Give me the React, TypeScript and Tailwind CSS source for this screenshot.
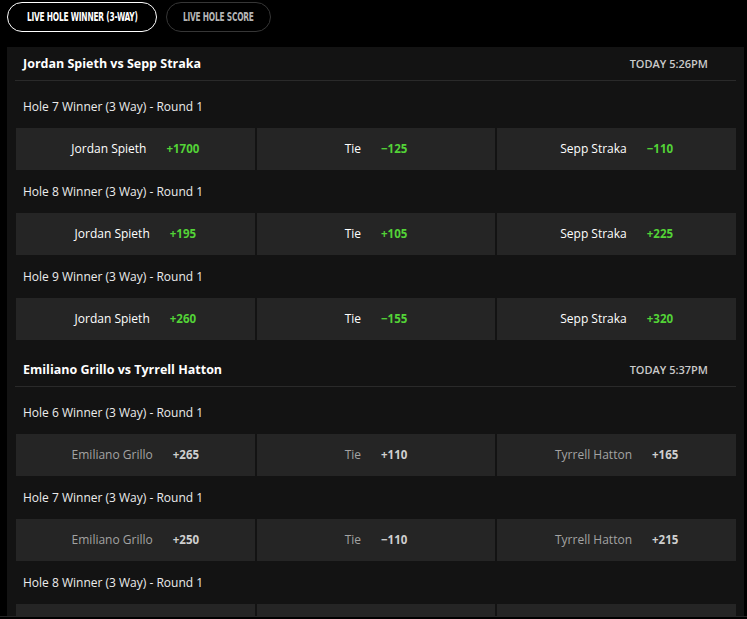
type Outcome = { name: string; odds: string };
type Market = { title: string; outcomes: Outcome[] };
type Match = { title: string; time: string; live: boolean; markets: Market[] };

const matches: Match[] = [
  {
    title: "Jordan Spieth vs Sepp Straka",
    time: "TODAY 5:26PM",
    live: true,
    markets: [
      {
        title: "Hole 7 Winner (3 Way) - Round 1",
        outcomes: [
          { name: "Jordan Spieth", odds: "+1700" },
          { name: "Tie", odds: "\u2212125" },
          { name: "Sepp Straka", odds: "\u2212110" },
        ],
      },
      {
        title: "Hole 8 Winner (3 Way) - Round 1",
        outcomes: [
          { name: "Jordan Spieth", odds: "+195" },
          { name: "Tie", odds: "+105" },
          { name: "Sepp Straka", odds: "+225" },
        ],
      },
      {
        title: "Hole 9 Winner (3 Way) - Round 1",
        outcomes: [
          { name: "Jordan Spieth", odds: "+260" },
          { name: "Tie", odds: "\u2212155" },
          { name: "Sepp Straka", odds: "+320" },
        ],
      },
    ],
  },
  {
    title: "Emiliano Grillo vs Tyrrell Hatton",
    time: "TODAY 5:37PM",
    live: false,
    markets: [
      {
        title: "Hole 6 Winner (3 Way) - Round 1",
        outcomes: [
          { name: "Emiliano Grillo", odds: "+265" },
          { name: "Tie", odds: "+110" },
          { name: "Tyrrell Hatton", odds: "+165" },
        ],
      },
      {
        title: "Hole 7 Winner (3 Way) - Round 1",
        outcomes: [
          { name: "Emiliano Grillo", odds: "+250" },
          { name: "Tie", odds: "\u2212110" },
          { name: "Tyrrell Hatton", odds: "+215" },
        ],
      },
      {
        // cells of this row are cut by the bottom edge, no text visible
        title: "Hole 8 Winner (3 Way) - Round 1",
        outcomes: [
          { name: "", odds: "" },
          { name: "", odds: "" },
          { name: "", odds: "" },
        ],
      },
    ],
  },
];

function OutcomeCell({ outcome, live }: { outcome: Outcome; live: boolean }) {
  return (
    <button className="flex h-[42px] items-center justify-center gap-5 bg-[#252525] text-[12px]">
      <span className={live ? "text-white" : "text-[#a3a3a3]"}>{outcome.name}</span>
      <span className={`text-[11.5px] font-bold ${live ? "text-[#53d337]" : "text-[#cfcfcf]"}`}>
        {outcome.odds}
      </span>
    </button>
  );
}

function MatchBlock({ match }: { match: Match }) {
  return (
    <section className="mb-[13px]">
      <div className="flex h-[34px] items-center justify-between border-b border-[#2a2a2a] pt-px pl-2 pr-7">
        <span className="text-[12.5px] font-bold text-white">{match.title}</span>
        <span className="text-[11px] font-semibold text-[#cacaca]">{match.time}</span>
      </div>
      <div className="pt-1">
        {match.markets.map((market, idx) => (
          <div key={idx}>
            <div className="flex h-[43px] items-center pl-2 text-[12px] text-[#ececec]">
              {market.title}
            </div>
            <div className="ml-px grid grid-cols-3 gap-[2px]">
              {market.outcomes.map((o, i) => (
                <OutcomeCell key={i} outcome={o} live={match.live} />
              ))}
            </div>
          </div>
        ))}
      </div>
    </section>
  );
}

function Tab({ label, active, width }: { label: string; active?: boolean; width: string }) {
  return (
    <button
      className={`flex h-[30px] items-center justify-center rounded-full border ${width} ${
        active ? "border-white text-white" : "border-[#363636] text-[#b5b5b5]"
      }`}
    >
      <span className="inline-block scale-x-[0.69] whitespace-nowrap font-['DejaVu_Sans_Condensed',sans-serif] text-[12px] font-bold tracking-[-0.3px]">
        {label}
      </span>
    </button>
  );
}

export default function App() {
  return (
    <div className="flex h-[619px] flex-col overflow-hidden bg-black font-['Open_Sans',sans-serif]">
      <div className="flex gap-[9px] px-[7px] pt-[2px]">
        <Tab label="LIVE HOLE WINNER (3-WAY)" active width="w-[150px]" />
        <Tab label="LIVE HOLE SCORE" width="w-[105px]" />
      </div>
      <div className="mt-[15px] ml-[7px] mr-[3px] min-h-0 flex-1 overflow-hidden bg-[#131313] px-2">
        {matches.map((m) => (
          <MatchBlock key={m.title} match={m} />
        ))}
      </div>
      <div className="h-px bg-[#262626]" />
      <div className="h-[2px]" />
    </div>
  );
}
